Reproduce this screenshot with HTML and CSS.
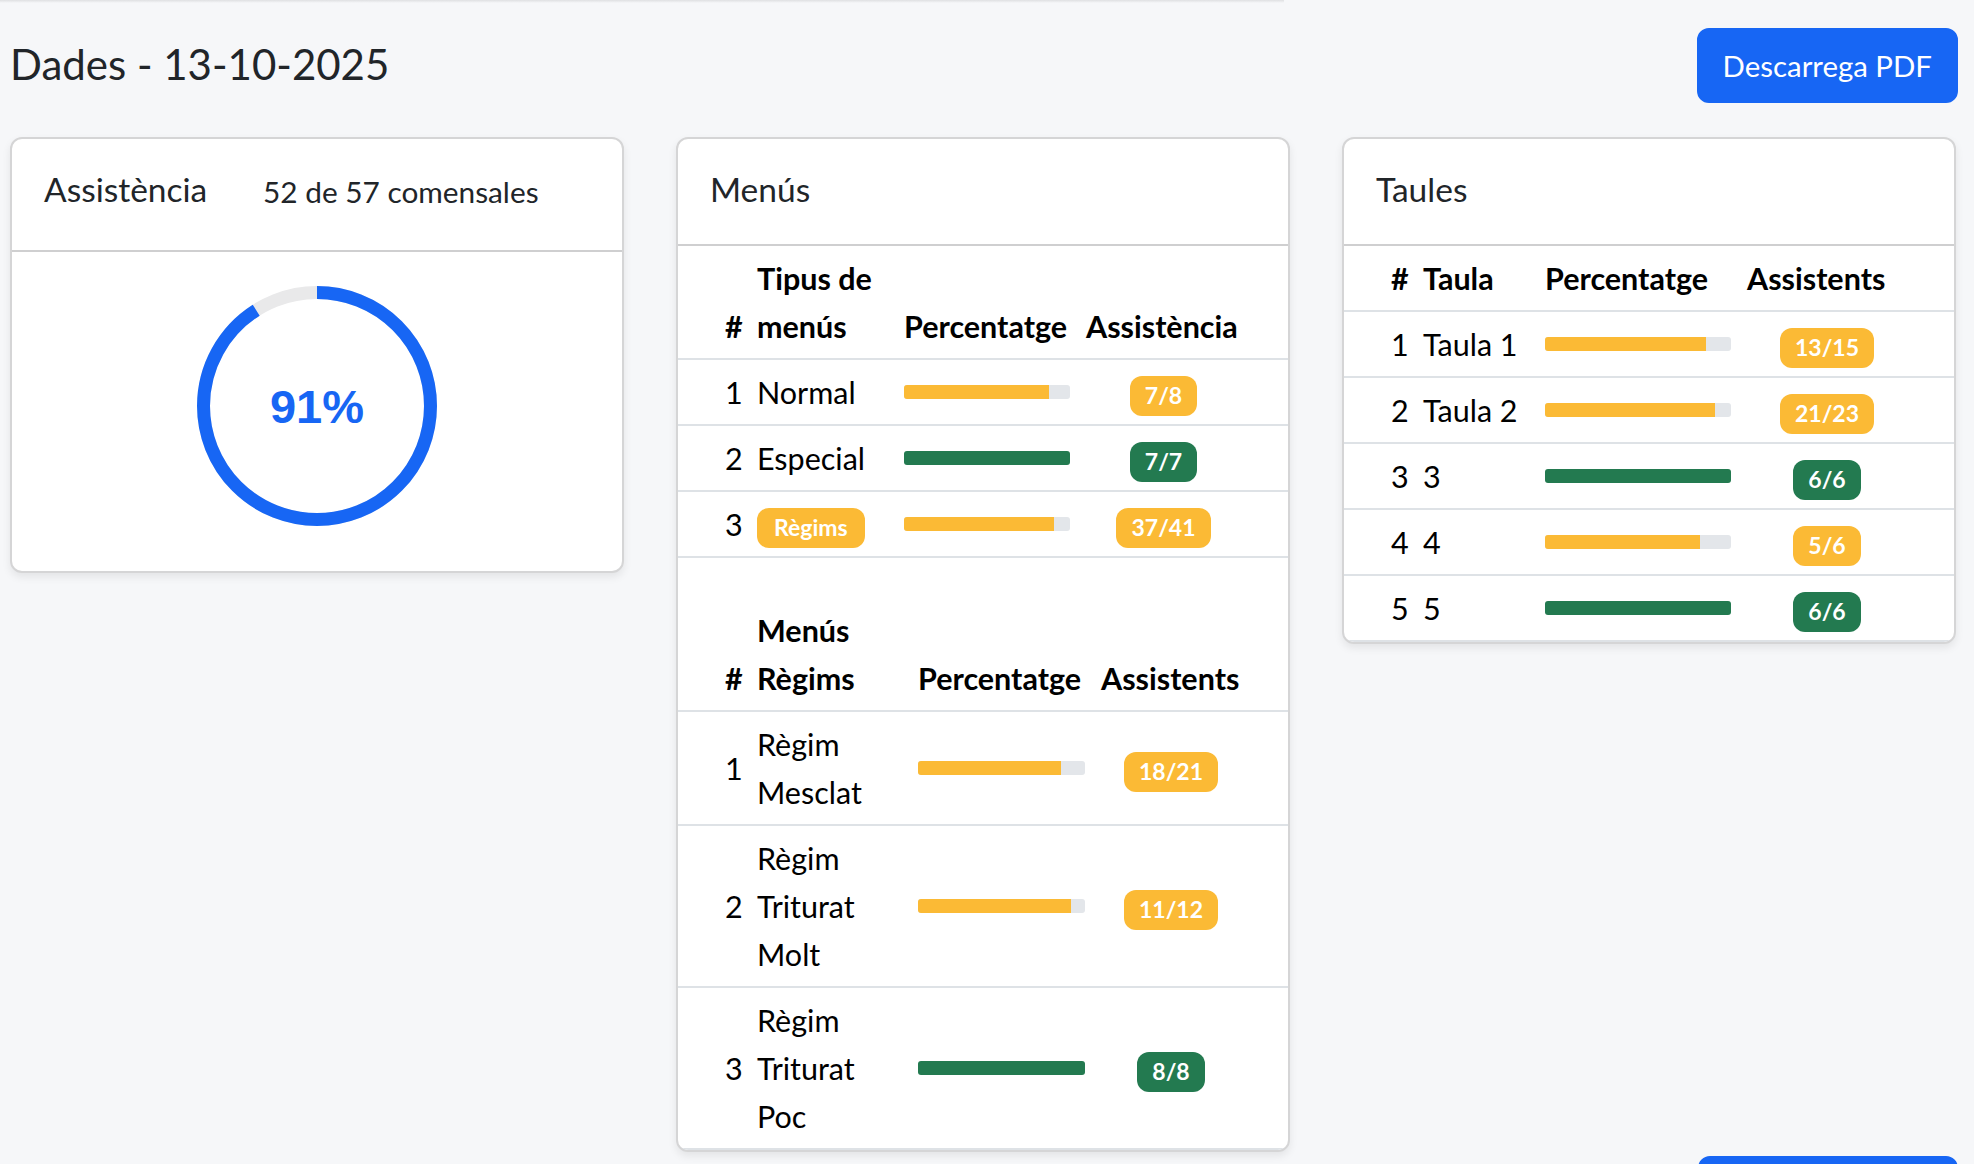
FILE: index.html
```html
<!DOCTYPE html>
<html lang="ca">
<head>
<meta charset="utf-8">
<title>Dades - 13-10-2025</title>
<link rel="stylesheet" href="styles.css">
</head>
<body>
<div class="topstrip"></div>
<div class="page">
  <div class="title-row">
    <h1 class="title">Dades - 13-10-2025</h1>
    <button class="btn">Descarrega PDF</button>
  </div>

  <div class="cards">
    <!-- Assistència -->
    <div class="card">
      <div class="card-header card-header-tall">
        <span class="hdr-label hdr-label-fixed">Assistència</span>
        <span class="hdr-count">52 de 57 comensales</span>
      </div>
      <div class="gauge-body">
        <svg class="gauge" viewBox="0 0 240 240" width="240" height="240">
          <circle cx="120" cy="120" r="113.5" fill="none" stroke="#e9e9ea" stroke-width="13"/>
          <circle cx="120" cy="120" r="113.5" fill="none" stroke="#1766f4" stroke-width="13" pathLength="100" stroke-dasharray="91 9" transform="rotate(-90 120 120)"/>
          <text x="120" y="137" text-anchor="middle" class="gauge-text">91%</text>
        </svg>
      </div>
    </div>

    <!-- Menús -->
    <div class="card">
      <div class="card-header">
        <span class="hdr-label">Menús</span>
      </div>
      <table class="tbl">
        <colgroup><col class="c-num"><col class="c-name1"><col class="c-pct1"><col class="c-as1"></colgroup>
        <thead>
          <tr><th>#</th><th>Tipus de menús</th><th class="nw">Percentatge</th><th class="nw">Assistència</th></tr>
        </thead>
        <tbody>
          <tr><td>1</td><td>Normal</td><td><div class="bar"><div class="fill warn" style="width:87.5%"></div></div></td><td class="c"><span class="badge warn">7/8</span></td></tr>
          <tr><td>2</td><td>Especial</td><td><div class="bar"><div class="fill ok" style="width:100%"></div></div></td><td class="c"><span class="badge ok">7/7</span></td></tr>
          <tr><td>3</td><td><span class="badge badge-wide warn">Règims</span></td><td><div class="bar"><div class="fill warn" style="width:90.2%"></div></div></td><td class="c"><span class="badge warn">37/41</span></td></tr>
        </tbody>
      </table>

      <table class="tbl tbl-second">
        <colgroup><col class="c-num"><col class="c-name2"><col class="c-pct2"><col class="c-as2"></colgroup>
        <thead>
          <tr><th>#</th><th>Menús Règims</th><th class="nw">Percentatge</th><th class="nw">Assistents</th></tr>
        </thead>
        <tbody>
          <tr><td>1</td><td>Règim Mesclat</td><td><div class="bar"><div class="fill warn" style="width:85.7%"></div></div></td><td class="c"><span class="badge warn">18/21</span></td></tr>
          <tr><td>2</td><td>Règim Triturat Molt</td><td><div class="bar"><div class="fill warn" style="width:91.7%"></div></div></td><td class="c"><span class="badge warn">11/12</span></td></tr>
          <tr><td>3</td><td>Règim Triturat Poc</td><td><div class="bar"><div class="fill ok" style="width:100%"></div></div></td><td class="c"><span class="badge ok">8/8</span></td></tr>
        </tbody>
      </table>
    </div>

    <!-- Taules -->
    <div class="card">
      <div class="card-header">
        <span class="hdr-label">Taules</span>
      </div>
      <table class="tbl">
        <colgroup><col class="c-num"><col class="c-name3"><col class="c-pct3"><col class="c-as3"></colgroup>
        <thead>
          <tr><th>#</th><th>Taula</th><th class="nw">Percentatge</th><th class="nw">Assistents</th></tr>
        </thead>
        <tbody>
          <tr><td>1</td><td>Taula 1</td><td><div class="bar"><div class="fill warn" style="width:86.7%"></div></div></td><td class="c"><span class="badge warn">13/15</span></td></tr>
          <tr><td>2</td><td>Taula 2</td><td><div class="bar"><div class="fill warn" style="width:91.3%"></div></div></td><td class="c"><span class="badge warn">21/23</span></td></tr>
          <tr><td>3</td><td>3</td><td><div class="bar"><div class="fill ok" style="width:100%"></div></div></td><td class="c"><span class="badge ok">6/6</span></td></tr>
          <tr><td>4</td><td>4</td><td><div class="bar"><div class="fill warn" style="width:83.3%"></div></div></td><td class="c"><span class="badge warn">5/6</span></td></tr>
          <tr><td>5</td><td>5</td><td><div class="bar"><div class="fill ok" style="width:100%"></div></div></td><td class="c"><span class="badge ok">6/6</span></td></tr>
        </tbody>
      </table>
    </div>
  </div>

  <div class="next-row">
    <button class="btn btn-blank" aria-label="Descarrega PDF"></button>
  </div>
</div>
</body>
</html>
```

FILE: styles.css
```css
* { box-sizing: border-box; }

html { overflow: hidden; }

body {
  margin: 0;
  background: #f6f7f9;
  font-family: Lato, "Liberation Sans", sans-serif;
  color: #212529;
}

.topstrip {
  width: 1284px;
  height: 3px;
  background: linear-gradient(#dfe0e2, #f6f7f9);
}

.page {
  padding: 25px 18px 0 10px;
}

.title-row {
  display: flex;
  justify-content: space-between;
  align-items: center;
}

.title {
  margin: 0 0 2px;
  font-size: 42px;
  font-weight: 400;
  line-height: 55px;
  color: #212529;
}

.btn {
  font-family: Lato, "Liberation Sans", sans-serif;
  font-size: 29.4px;
  line-height: 47px;
  font-weight: 400;
  color: #fff;
  background: #1766f4;
  border: 2px solid #1766f4;
  border-radius: 12px;
  padding: 12px 24px;
  margin-right: -2px;
}

.btn-blank {
  width: 260px;
  height: 75px;
}

.cards {
  display: grid;
  grid-template-columns: repeat(3, 1fr);
  gap: 52px;
  margin-top: 34px;
  align-items: start;
}

.card {
  background: #fff;
  border: 2px solid #d5d5d6;
  border-radius: 12px;
  box-shadow: 0 4px 8px rgba(0, 0, 0, 0.08);
  overflow: hidden;
}

.card-header {
  height: 107px;
  padding: 30px 32px 0;
  border-bottom: 2px solid #cfcfd0;
  display: flex;
  align-items: flex-start;
}

.card-header-tall {
  height: 113px;
}

.hdr-label {
  font-size: 33.5px;
  line-height: 40px;
  color: #212529;
}

.hdr-label-fixed {
  width: 219px;
  flex: none;
}

.hdr-count {
  margin-top: 3px;
  font-size: 29.8px;
  line-height: 40px;
  color: #212529;
}

.gauge-body {
  display: flex;
  justify-content: center;
  padding: 34px 0 45px;
}

.gauge { display: block; }

.gauge-text {
  font-family: "Liberation Sans", Arial, sans-serif;
  font-weight: 700;
  font-size: 47px;
  fill: #1766f4;
}

.tbl {
  width: 100%;
  border-collapse: collapse;
  table-layout: fixed;
  font-size: 30.5px;
  line-height: 48px;
  color: #000;
}

.tbl-second {
  margin-top: 40px;
}

.tbl th,
.tbl td {
  padding: 8px;
  border-bottom: 2px solid #dee2e6;
}

.tbl th {
  font-weight: 700;
  text-align: left;
  vertical-align: bottom;
}

.tbl td {
  vertical-align: middle;
}

.tbl th:first-child,
.tbl td:first-child {
  padding-left: 47px;
}

.tbl th:last-child,
.tbl td:last-child {
  padding-right: 47px;
}

.tbl .nw { white-space: nowrap; }

.tbl td.c { text-align: center; }

.c-num { width: 71px; }
.c-name1 { width: 147px; }
.c-pct1 { width: 182px; }
.c-as1 { width: 210px; }
.c-name2 { width: 161px; }
.c-pct2 { width: 183px; }
.c-as2 { width: 195px; }
.c-name3 { width: 122px; }
.c-pct3 { width: 202px; }
.c-as3 { width: 215px; }

.bar {
  height: 14px;
  background: #e3e6ea;
  border-radius: 3px;
  overflow: hidden;
}

.fill { height: 100%; }
.fill.warn { background: #fbba35; }
.fill.ok { background: #237a50; }

.badge {
  display: inline-block;
  padding: 8.5px 15px;
  font-size: 23px;
  font-weight: 700;
  line-height: 1;
  color: #fff;
  border-radius: 12px;
}

.badge-wide {
  padding-left: 17px;
  padding-right: 17px;
}

.badge.warn { background: #fbba35; }
.badge.ok { background: #237a50; }

.next-row {
  display: flex;
  justify-content: flex-end;
  margin-top: 4px;
}
```
